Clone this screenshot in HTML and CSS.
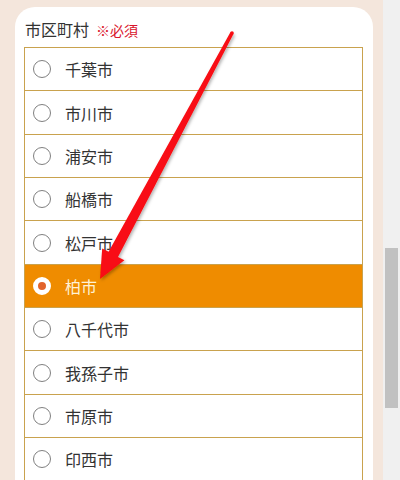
FILE: index.html
```html
<!DOCTYPE html>
<html lang="ja">
<head>
<meta charset="utf-8">
<link rel="stylesheet" href="styles.css">
</head>
<body>
<div class="page">
  <main class="main">
    <section class="card">
      <div class="label">市区町村<span class="req">※必須</span></div>
      <ul class="list">
        <li class="row"><span class="radio"></span><span class="name">千葉市</span></li>
        <li class="row"><span class="radio"></span><span class="name">市川市</span></li>
        <li class="row"><span class="radio"></span><span class="name">浦安市</span></li>
        <li class="row"><span class="radio"></span><span class="name">船橋市</span></li>
        <li class="row"><span class="radio"></span><span class="name">松戸市</span></li>
        <li class="row selected"><span class="radio"></span><span class="name">柏市</span></li>
        <li class="row"><span class="radio"></span><span class="name">八千代市</span></li>
        <li class="row"><span class="radio"></span><span class="name">我孫子市</span></li>
        <li class="row"><span class="radio"></span><span class="name">市原市</span></li>
        <li class="row"><span class="radio"></span><span class="name">印西市</span></li>
      </ul>
    </section>
  </main>
  <div class="scrollbar"><div class="thumb"></div></div>
</div>
<svg class="arrow" width="400" height="480" viewBox="0 0 400 480">
  <defs>
    <filter id="sh" x="-20%" y="-20%" width="140%" height="140%">
      <feDropShadow dx="1.5" dy="1.5" stdDeviation="1.5" flood-color="#000" flood-opacity="0.3"/>
    </filter>
  </defs>
  <polygon filter="url(#sh)" fill="#f80d12" points="230.4,32.2 233.6,33.8 118,256.9 124.4,260.3 100,279 102.2,248.4 108.6,251.8"/>
  <circle cx="232" cy="33" r="1.8" fill="#f80d12"/>
</svg>
</body>
</html>
```
FILE: styles.css
```css
html, body {
  margin: 0;
  padding: 0;
  height: 480px;
  overflow: hidden;
}
body {
  font-family: "Noto Sans CJK JP", "Noto Sans", sans-serif;
  color: #333;
  position: relative;
}
.page {
  display: flex;
  height: 480px;
}
.main {
  flex: 1;
  background: #f4e6dc;
  padding: 7px 10px 0 15px;
}
.card {
  background: #fff;
  border-radius: 20px 20px 0 0;
  padding: 10px 10px 0 9px;
  height: 100%;
  box-sizing: border-box;
}
.label {
  font-size: 16px;
  line-height: 24px;
  height: 24px;
  margin-bottom: 6px;
  padding-left: 1px;
  color: #333;
}
.req {
  color: #d9142b;
  font-size: 14px;
  margin-left: 7px;
}
.list {
  list-style: none;
  margin: 0;
  padding: 0;
  border: 1px solid #c9a24e;
  border-bottom: none;
}
.row {
  display: flex;
  align-items: center;
  height: 43.35px;
  box-sizing: border-box;
  border-bottom: 1px solid #c9a24e;
  padding-left: 8px;
  background: #fff;
}
.radio {
  width: 18px;
  height: 18px;
  box-sizing: border-box;
  border: 1px solid #808080;
  border-radius: 50%;
  background: #fff;
  flex: none;
}
.name {
  margin-left: 14px;
  font-size: 16px;
  color: #333;
}
.row.selected {
  background: #ef8c00;
}
.row.selected .radio {
  border: 5px solid #fff;
  background: #e2642c;
}
.row.selected .name {
  color: #fff2d6;
}
.scrollbar {
  width: 17px;
  background: #f0f0f0;
  flex: none;
}
.thumb {
  margin: 248px 2px 0 2px;
  height: 160px;
  background: #c1c1c1;
}
.arrow {
  position: absolute;
  left: 0;
  top: 0;
  pointer-events: none;
}
```
